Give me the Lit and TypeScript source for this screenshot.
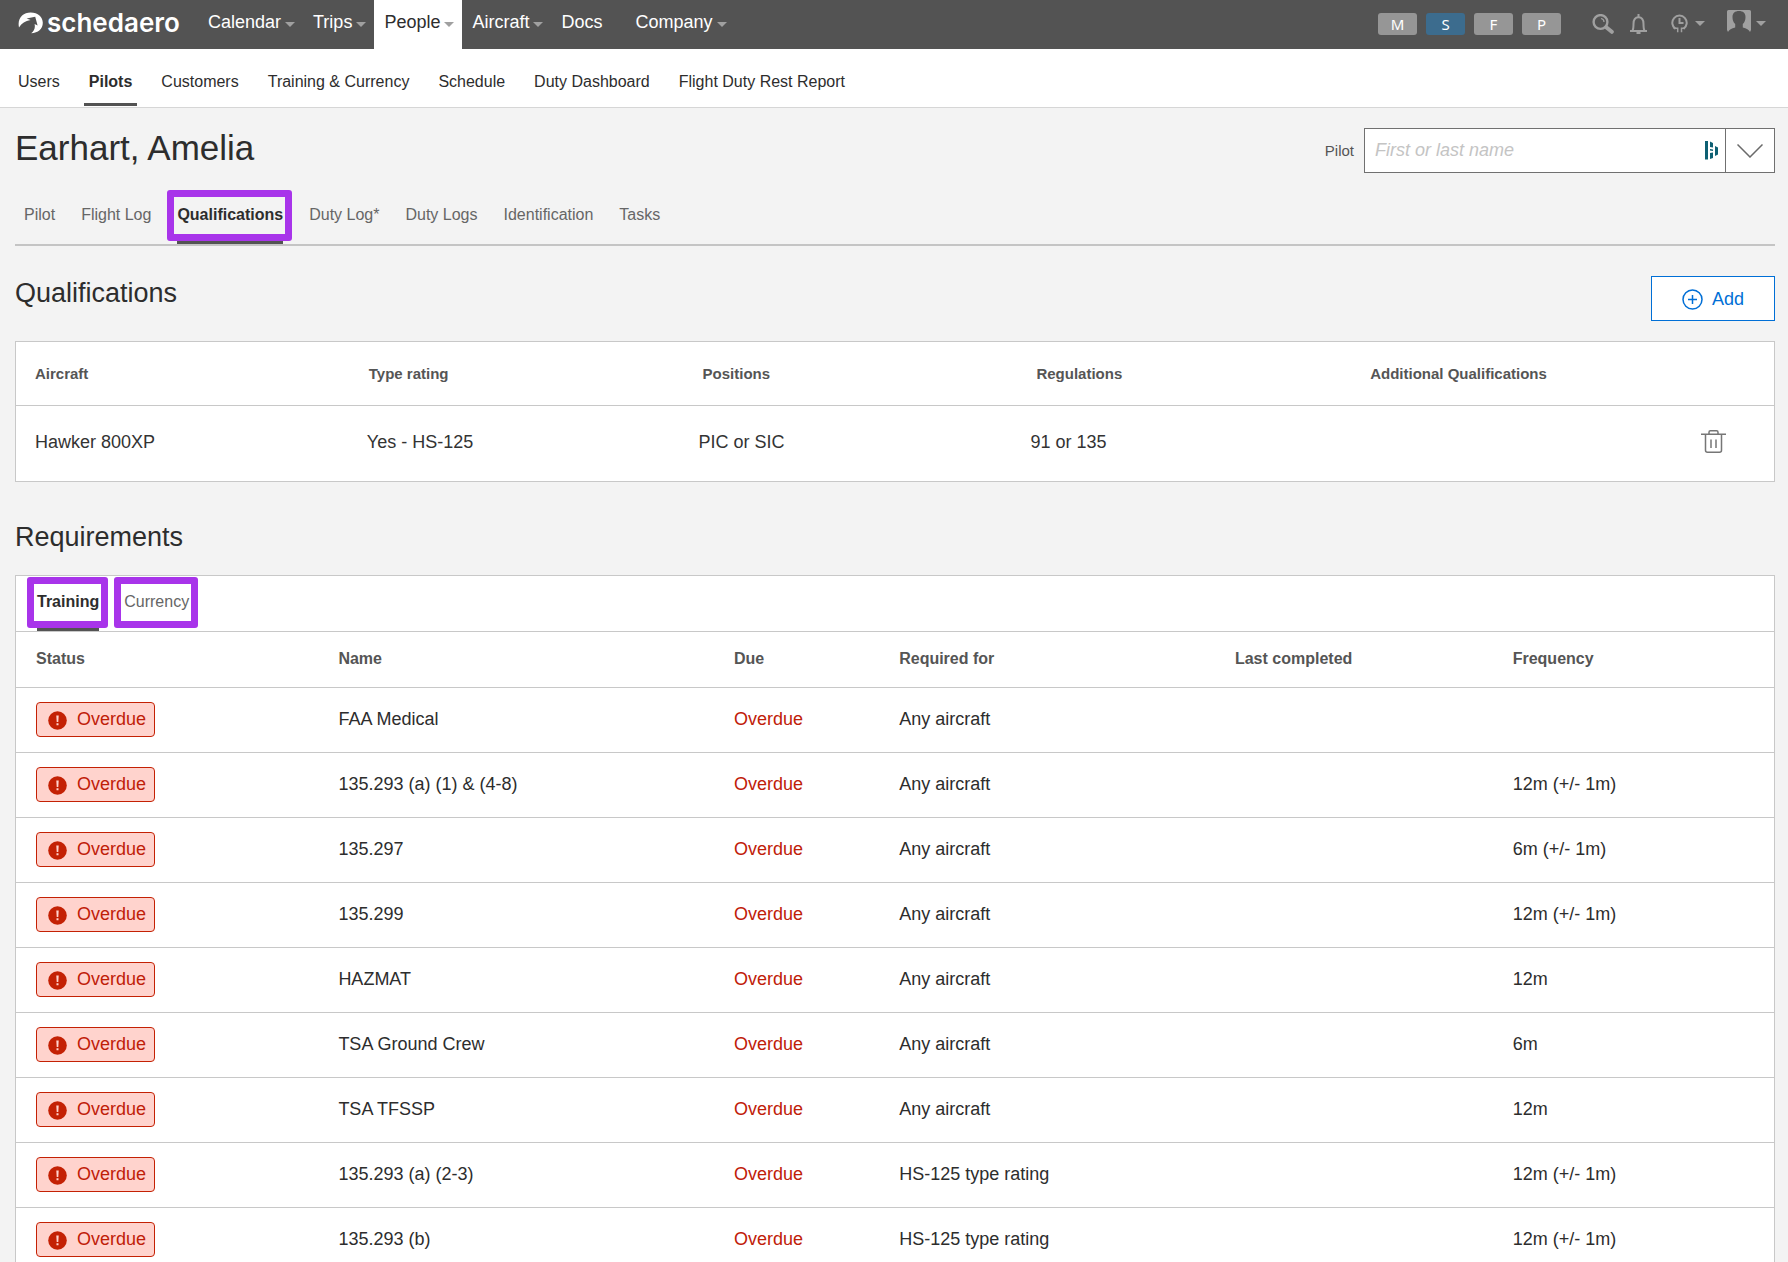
import { LitElement, html, css, nothing } from "lit";
import { customElement } from "lit/decorators.js";
import { classMap } from "lit/directives/class-map.js";

interface Tab {
  label: string;
  active?: boolean;
  marked?: boolean;
}

interface Requirement {
  name: string;
  requiredFor: string;
  frequency: string;
}

const MAIN_MENU = [
  { label: "Calendar", menu: true },
  { label: "Trips", menu: true },
  { label: "People", menu: true, active: true },
  { label: "Aircraft", menu: true },
  { label: "Docs", menu: false },
  { label: "Company", menu: true },
];

const SECTIONS: Tab[] = [
  { label: "Users" },
  { label: "Pilots", active: true },
  { label: "Customers" },
  { label: "Training & Currency" },
  { label: "Schedule" },
  { label: "Duty Dashboard" },
  { label: "Flight Duty Rest Report" },
];

const PILOT_TABS: Tab[] = [
  { label: "Pilot" },
  { label: "Flight Log" },
  { label: "Qualifications", active: true, marked: true },
  { label: "Duty Log*" },
  { label: "Duty Logs" },
  { label: "Identification" },
  { label: "Tasks" },
];

const REQUIREMENTS: Requirement[] = [
  { name: "FAA Medical", requiredFor: "Any aircraft", frequency: "" },
  { name: "135.293 (a) (1) & (4-8)", requiredFor: "Any aircraft", frequency: "12m (+/- 1m)" },
  { name: "135.297", requiredFor: "Any aircraft", frequency: "6m (+/- 1m)" },
  { name: "135.299", requiredFor: "Any aircraft", frequency: "12m (+/- 1m)" },
  { name: "HAZMAT", requiredFor: "Any aircraft", frequency: "12m" },
  { name: "TSA Ground Crew", requiredFor: "Any aircraft", frequency: "6m" },
  { name: "TSA TFSSP", requiredFor: "Any aircraft", frequency: "12m" },
  { name: "135.293 (a) (2-3)", requiredFor: "HS-125 type rating", frequency: "12m (+/- 1m)" },
  { name: "135.293 (b)", requiredFor: "HS-125 type rating", frequency: "12m (+/- 1m)" },
];

const base = css`
  *,
  *::before,
  *::after {
    box-sizing: border-box;
  }
  :host {
    display: block;
    font-family: "Liberation Sans", Arial, sans-serif;
    color: #2d2d2d;
  }
  a {
    color: inherit;
    text-decoration: none;
  }
  button,
  input {
    font: inherit;
    color: inherit;
    margin: 0;
    padding: 0;
    border: 0;
    border-radius: 0;
    background: none;
  }
  button {
    cursor: pointer;
  }
  svg {
    display: block;
    flex: none;
  }
`;

const caret = html`<svg width="10" height="5" viewBox="0 0 10 5" aria-hidden="true">
  <path d="M0 0h10L5 5z" fill="#a0a0a0" />
</svg>`;

@customElement("top-bar")
class TopBar extends LitElement {
  static styles = [
    base,
    css`
      .bar {
        display: flex;
        height: 49px;
        padding: 0 22px 0 18px;
        background: #535353;
        color: #fff;
      }
      .logo {
        display: flex;
        align-items: center;
        gap: 4px;
        width: 180px;
        padding-bottom: 3px;
        font: 600 26px/26px Inter, sans-serif;
      }
      .menu {
        display: flex;
        flex: 1;
      }
      .item {
        display: flex;
        align-items: center;
        gap: 4px;
        padding: 0 8px 5px 10px;
        font-size: 18px;
        line-height: 20px;
      }
      .item.plain {
        padding-right: 23px;
      }
      .item.active {
        background: #fff;
        color: #2d2d2d;
      }
      .item svg {
        margin-top: 4px;
      }
      .tools {
        display: flex;
        align-items: center;
        padding-bottom: 2px;
      }
      .modes {
        display: flex;
        gap: 9px;
        margin-right: 31px;
      }
      .mode {
        width: 39px;
        height: 22px;
        border-radius: 3px;
        background: #969696;
        color: #fff;
        font: 15px/22px "Noto Sans", sans-serif;
      }
      .mode.on {
        background: #3c6c8e;
      }
      .tool {
        display: flex;
        align-items: center;
        gap: 7px;
      }
      .bell {
        margin: 0 24px 0 16px;
      }
      .user {
        margin-left: 22px;
        gap: 5px;
      }
      .user svg:first-child {
        margin-bottom: 5px;
      }
    `,
  ];

  render() {
    return html`
      <header class="bar">
        <a class="logo" href="#">
          <svg width="25" height="22" viewBox="0 0 25 22" aria-hidden="true">
            <path
              d="M1 15.500C-1 6 5 .400 12.600.400 20 .400 24.800 5 24.800 10.800c0 6.200-4.700 10.200-11.600 10.500 3.200-2.400 4.200-5.800 3.400-9.300l3 1.400-2.400-8.600-8.600 1.800 4 1.400C7 9 4 11 1 15.500z"
              fill="#fff"
            />
          </svg>
          <span>schedaero</span>
        </a>
        <nav class="menu" aria-label="Main">
          ${MAIN_MENU.map(
            (m) => html`<a
              href="#"
              class=${classMap({ item: true, active: !!m.active, plain: !m.menu })}
              >${m.label}${m.menu ? caret : nothing}</a
            >`
          )}
        </nav>
        <div class="tools">
          <div class="modes">
            ${["M", "S", "F", "P"].map(
              (m) => html`<button class=${classMap({ mode: true, on: m === "S" })}>${m}</button>`
            )}
          </div>
          <button class="tool" aria-label="Search">
            <svg width="22" height="20" viewBox="0 0 22 20" fill="none" stroke="#a0a0a0">
              <circle cx="8.500" cy="8" r="6.900" stroke-width="2.400" />
              <path d="M9 4.500a3.500 3.500 0 0 1 3 3.500" stroke-width="1.200" />
              <path d="M14.200 13.200l5.600 4.600" stroke-width="4" stroke-linecap="round" />
            </svg>
          </button>
          <button class="tool bell" aria-label="Notifications">
            <svg width="17" height="20" viewBox="0 0 17 20" fill="none" stroke="#a0a0a0" stroke-width="2">
              <path d="M0 17h17M2.500 16.500c1-1.500 1-3 1-6.500 0-4.500 2-6.800 5-6.800s5 2.300 5 6.800c0 3.500 0 5 1 6.500" />
              <path d="M8.500 0v3M6.500 19h4" />
            </svg>
          </button>
          <button class="tool" aria-label="History">
            <svg width="17" height="19" viewBox="0 0 17 19" fill="none" stroke="#a0a0a0" stroke-width="2">
              <path d="M4.500 14.800A7.200 7.200 0 1 1 12.500 14.800" />
              <path d="M8.500 4v5h4" />
              <path d="M2.500 14.200h4.200v4M14 14.200h-3.500v4" stroke-width="1.500" />
            </svg>
            ${caret}
          </button>
          <button class="tool user" aria-label="Account">
            <svg width="24" height="22" viewBox="0 0 24 22" aria-hidden="true">
              <path
                d="M1.500 0h21Q24 0 24 1.500V20l-1 2c-1-2.500-3.500-3.500-7.200-4.600V14c1.800-1.500 2.700-4 2.700-7 0-4-2.500-6-6.500-6S5.500 3 5.500 7c0 3 .9 5.500 2.700 7v3.400C4.500 18.500 2 19.500 1 22l-1-2V1.500Q0 0 1.500 0z"
                fill="#a0a0a0"
              />
            </svg>
            ${caret}
          </button>
        </div>
      </header>
    `;
  }
}

@customElement("section-nav")
class SectionNav extends LitElement {
  static styles = [
    base,
    css`
      .nav {
        display: flex;
        gap: 19px;
        padding: 0 13px;
        border-bottom: 1px solid #d6d6d6;
        background: #fff;
      }
      .link {
        margin-bottom: 1px;
        padding: 23px 5px 11px;
        border-bottom: 3px solid transparent;
        font-size: 16px;
        line-height: 20px;
      }
      .link.active {
        border-color: #535353;
        font-weight: bold;
      }
    `,
  ];

  render() {
    return html`
      <nav class="nav" aria-label="People">
        ${SECTIONS.map(
          (s) => html`<a href="#" class=${classMap({ link: true, active: !!s.active })}>${s.label}</a>`
        )}
      </nav>
    `;
  }
}

@customElement("tab-strip")
class TabStrip extends LitElement {
  static properties = { tabs: { attribute: false }, label: { type: String } };
  declare tabs: Tab[];
  declare label: string;

  static styles = [
    base,
    css`
      .strip {
        display: flex;
      }
      .tab {
        position: relative;
        margin-right: var(--tab-gap, 26px);
        padding-bottom: 16px;
        border-bottom: 3px solid transparent;
        color: #666;
        font-size: 16px;
        line-height: 20px;
      }
      .tab.active {
        border-color: #535353;
        color: #2d2d2d;
        font-weight: bold;
      }
      .tab.marked::after {
        content: "";
        position: absolute;
        inset: -15px -9px 0 -10px;
        border: 7px solid #a834ea;
        border-radius: 3px;
      }
    `,
  ];

  render() {
    return html`
      <nav class="strip" aria-label=${this.label}>
        ${this.tabs.map(
          (t) => html`<a
            href="#"
            class=${classMap({ tab: true, active: !!t.active, marked: !!t.marked })}
            >${t.label}</a
          >`
        )}
      </nav>
    `;
  }
}

@customElement("pilot-picker")
class PilotPicker extends LitElement {
  static styles = [
    base,
    css`
      .picker {
        display: flex;
        align-items: center;
        gap: 10px;
      }
      .label {
        color: #555;
        font-size: 15px;
      }
      .box {
        display: flex;
        align-items: center;
        width: 411px;
        height: 45px;
        border: 1px solid #707070;
        background: #fff;
      }
      .input {
        flex: 1;
        min-width: 0;
        height: 43px;
        padding: 0 10px;
        font-size: 18px;
        outline: none;
      }
      .input::placeholder {
        color: #c4c4c4;
        font-style: italic;
        opacity: 1;
      }
      .open {
        display: grid;
        place-items: center;
        width: 49px;
        height: 43px;
        margin-left: 7px;
        border-left: 1px solid #707070;
      }
    `,
  ];

  render() {
    return html`
      <div class="picker">
        <label class="label" for="pilot">Pilot</label>
        <div class="box">
          <input class="input" id="pilot" type="text" placeholder="First or last name" />
          <svg width="13" height="19" viewBox="0 0 13 19" fill="#0e6073" aria-hidden="true">
            <path d="M0 0h3v18.500H0zM5 .500l3 1.500v4.500L5 6zM5 12l3-.500v5.500l-3 1zM5 8l3 .500v1.500l-3-.500zM10 5l3 1.500v7L10 15z" />
          </svg>
          <button class="open" aria-label="Show pilots">
            <svg width="26" height="14" viewBox="0 0 26 14" fill="none" stroke="#6a6a6a" stroke-width="1.500">
              <path d="M.5.500L13 13 25.500.500" />
            </svg>
          </button>
        </div>
      </div>
    `;
  }
}

@customElement("qualification-table")
class QualificationTable extends LitElement {
  static styles = [
    base,
    css`
      .table {
        display: block;
        border: 1px solid #c8c8c8;
        background: #fff;
      }
      .group {
        display: block;
      }
      .row {
        display: grid;
        align-items: center;
        padding-left: 19px;
      }
      .head {
        grid-template-columns: repeat(5, 1fr) 70px;
        height: 64px;
        padding-bottom: 1px;
        border-bottom: 1px solid #c8c8c8;
        color: #555;
        font-size: 15px;
      }
      .body {
        grid-template-columns: repeat(5, 1fr) 80px;
        padding-top: 24px;
        padding-bottom: 28px;
        color: #333;
        font-size: 18px;
        line-height: 22px;
      }
      .cell {
        padding: 0;
        text-align: left;
      }
      .action {
        padding-left: 7px;
      }
      .delete {
        display: block;
      }
    `,
  ];

  render() {
    const heads = ["Aircraft", "Type rating", "Positions", "Regulations", "Additional Qualifications"];
    const cells = ["Hawker 800XP", "Yes - HS-125", "PIC or SIC", "91 or 135", ""];
    return html`
      <table class="table">
        <thead class="group">
          <tr class="row head">
            ${heads.map((h) => html`<th class="cell" scope="col">${h}</th>`)}
          </tr>
        </thead>
        <tbody class="group">
          <tr class="row body">
            ${cells.map((c) => html`<td class="cell">${c}</td>`)}
            <td class="cell action">
              <button class="delete" aria-label="Delete Hawker 800XP">
                <svg width="25" height="23" viewBox="0 0 25 23" fill="none" stroke="#767676" stroke-width="1.500">
                  <path d="M0 4.200h25M8 4V2.200Q8 .8 9.400.8h6.200Q17 .8 17 2.200V4M4.500 4.500v15.700q0 2 2 2h12q2 0 2-2V4.500M10 9.500v8.500M15 9.500v8.500" />
                </svg>
              </button>
            </td>
          </tr>
        </tbody>
      </table>
    `;
  }
}

@customElement("requirement-list")
class RequirementList extends LitElement {
  static styles = [
    base,
    css`
      .card {
        border: 1px solid #c8c8c8;
        background: #fff;
      }
      .tabs {
        --tab-gap: 25px;
        padding: 16px 21px 0;
        border-bottom: 1px solid #c8c8c8;
      }
      .table {
        width: 100%;
        border-collapse: collapse;
        table-layout: fixed;
      }
      .status {
        width: 17.2%;
      }
      .name {
        width: 22.5%;
      }
      .due {
        width: 9.4%;
      }
      .for {
        width: 19.1%;
      }
      .last {
        width: 15.8%;
      }
      .cell {
        height: 65px;
        padding: 0 0 0 20px;
        border-bottom: 1px solid #c8c8c8;
        font-size: 18px;
        text-align: left;
      }
      .cell.head {
        height: 55px;
        color: #555;
        font-size: 16px;
      }
      .cell.late {
        color: #bf2008;
      }
      .badge {
        display: flex;
        align-items: center;
        gap: 10px;
        width: max-content;
        height: 35px;
        padding: 0 8px 0 11px;
        border: 1px solid #c42104;
        border-radius: 4px;
        background: #ffd3cd;
        color: #bf2008;
      }
      .badge svg {
        margin-top: 2px;
      }
    `,
  ];

  render() {
    const tabs: Tab[] = [
      { label: "Training", active: true, marked: true },
      { label: "Currency", marked: true },
    ];
    return html`
      <div class="card">
        <div class="tabs"><tab-strip label="Requirements" .tabs=${tabs}></tab-strip></div>
        <table class="table">
          <thead>
            <tr>
              <th class="cell head status" scope="col">Status</th>
              <th class="cell head name" scope="col">Name</th>
              <th class="cell head due" scope="col">Due</th>
              <th class="cell head for" scope="col">Required for</th>
              <th class="cell head last" scope="col">Last completed</th>
              <th class="cell head" scope="col">Frequency</th>
            </tr>
          </thead>
          <tbody>
            ${REQUIREMENTS.map(
              (r) => html`<tr>
                <td class="cell">
                  <span class="badge">
                    <svg width="19" height="19" viewBox="0 0 19 19" aria-hidden="true">
                      <circle cx="9.500" cy="9.500" r="9.300" fill="#c42104" />
                      <path d="M8.300 4.500h2.400l-.4 6.500H8.700zM8.500 12.300h2v2h-2z" fill="#ffd3cd" />
                    </svg>
                    Overdue
                  </span>
                </td>
                <td class="cell">${r.name}</td>
                <td class="cell late">Overdue</td>
                <td class="cell">${r.requiredFor}</td>
                <td class="cell"></td>
                <td class="cell">${r.frequency}</td>
              </tr>`
            )}
          </tbody>
        </table>
      </div>
    `;
  }
}

@customElement("app-root")
class AppRoot extends LitElement {
  static styles = [
    base,
    css`
      :host {
        min-height: 100vh;
        background: #f3f3f3;
      }
      .page {
        padding: 20px 13px 40px 15px;
      }
      .heading {
        display: flex;
        align-items: flex-start;
        justify-content: space-between;
      }
      .title {
        margin: 0;
        font-size: 35px;
        font-weight: normal;
        line-height: 40px;
      }
      .tabs {
        margin: 32px 0 30px;
        padding-left: 9px;
        border-bottom: 2px solid #c4c4c4;
      }
      .subtitle {
        margin: 0;
        font-size: 27px;
        font-weight: normal;
        line-height: 34px;
      }
      .add {
        display: flex;
        align-items: center;
        justify-content: center;
        gap: 9px;
        width: 124px;
        height: 45px;
        padding-top: 1px;
        border: 1px solid #006fd6;
        background: #fff;
        color: #006fd6;
        font-size: 18px;
      }
      .qualifications {
        margin: 20px 0 38px;
      }
      .requirements {
        margin-top: 21px;
      }
    `,
  ];

  render() {
    return html`
      <top-bar></top-bar>
      <section-nav></section-nav>
      <main class="page">
        <div class="heading">
          <h1 class="title">Earhart, Amelia</h1>
          <pilot-picker></pilot-picker>
        </div>
        <div class="tabs"><tab-strip label="Pilot record" .tabs=${PILOT_TABS}></tab-strip></div>
        <div class="heading">
          <h2 class="subtitle">Qualifications</h2>
          <button class="add">
            <svg width="21" height="21" viewBox="0 0 21 21" fill="none" stroke="#006fd6" stroke-width="1.500" aria-hidden="true">
              <circle cx="10.500" cy="10.500" r="9.500" />
              <path d="M6 10.500h9M10.500 6v9" />
            </svg>
            Add
          </button>
        </div>
        <qualification-table class="qualifications"></qualification-table>
        <h2 class="subtitle">Requirements</h2>
        <requirement-list class="requirements"></requirement-list>
      </main>
    `;
  }
}
